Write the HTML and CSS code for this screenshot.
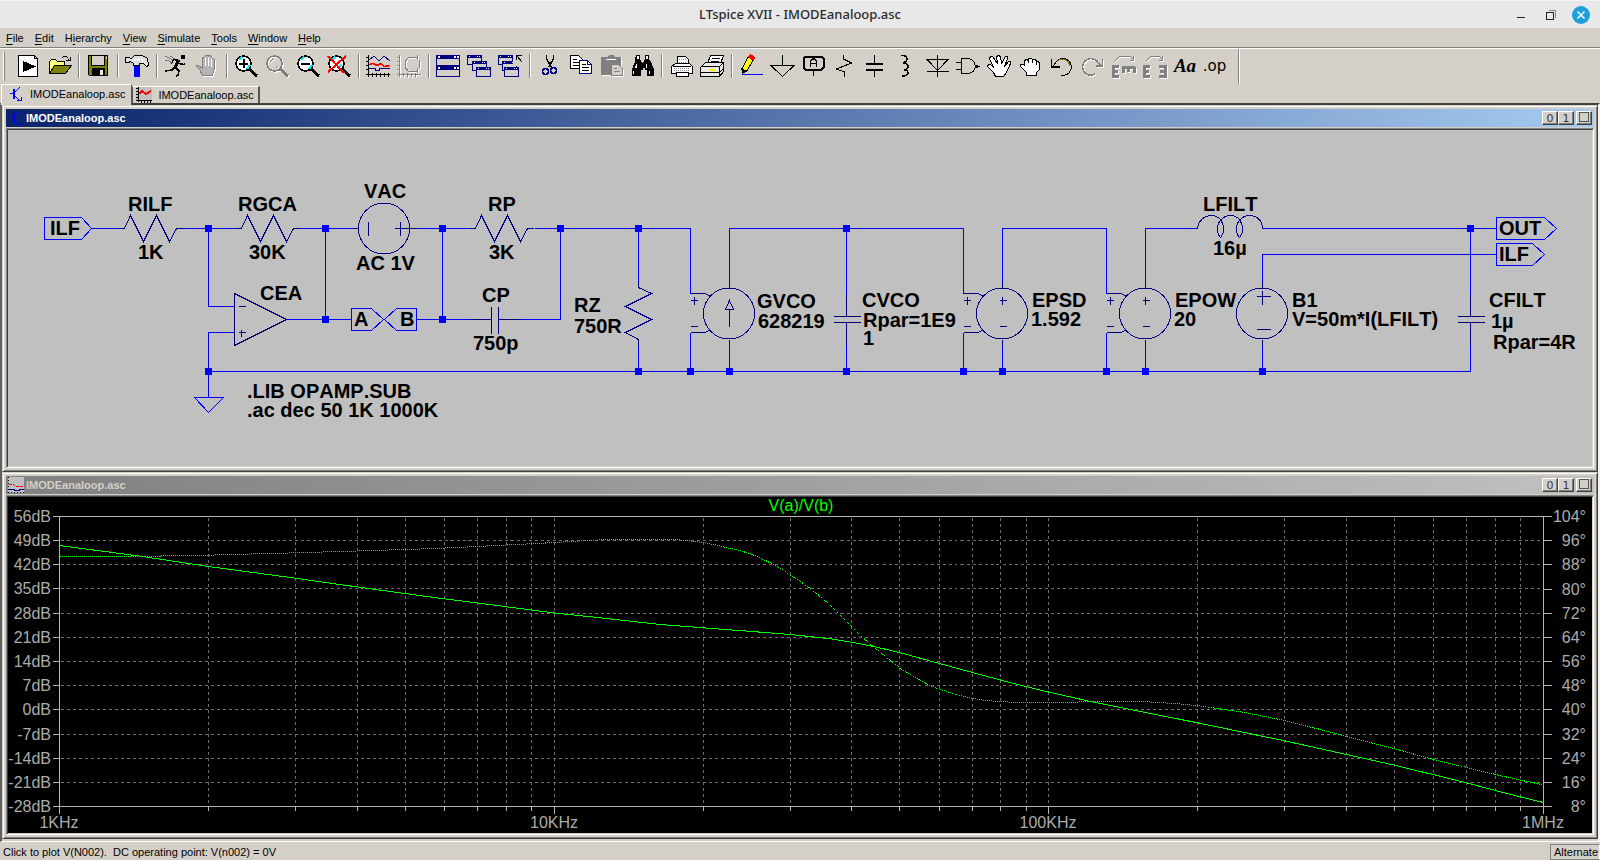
FILE: index.html
```html
<!DOCTYPE html>
<html lang="en">
<head>
<meta charset="utf-8">
<title>LTspice XVII - IMODEanaloop.asc</title>
<link rel="stylesheet" href="styles.css">
</head>
<body>
<header class="titlebar">
  <h1>LTspice XVII - IMODEanaloop.asc</h1>
  <div class="wm">
    <button aria-label="Minimize"><svg viewBox="0 0 18 18"><path d="M5 11.500h8" stroke="#222"/></svg></button>
    <button aria-label="Restore"><svg viewBox="0 0 18 18"><path d="M6.500 4.500h7v7" stroke="#888"/><path d="M4.500 6.500h7v7h-7z" stroke="#222"/></svg></button>
    <button aria-label="Close"><svg viewBox="0 0 18 18" class="smooth"><circle cx="9" cy="9" r="9" fill="#1f9ede"/><path d="M5.500 5.500l7 7M12.500 5.500l-7 7" stroke="#fff" stroke-width="1.500"/></svg></button>
  </div>
</header>
<nav class="menubar">
  <button><u>F</u>ile</button><button><u>E</u>dit</button><button>H<u>i</u>erarchy</button><button><u>V</u>iew</button><button><u>S</u>imulate</button><button><u>T</u>ools</button><button><u>W</u>indow</button><button><u>H</u>elp</button>
</nav>
<div class="toolbar" role="toolbar" aria-label="Main">
  <span class="grip"></span>
  <button aria-label="New schematic"><svg viewBox="0 0 24 24"><path d="M2.500 1.500h16l3 3v18h-19z" fill="#fff"/><path d="M18.500 1.500v3h3"/><path d="M7 7L20 12.500L7 18z" fill="#000" stroke="none"/></svg></button>
  <button aria-label="Open"><svg viewBox="0 0 24 24"><path d="M2.500 19.500v-12l2-2h4l2 2h7v4h-10z" fill="#ffff80"/><path d="M2.500 19.500l5-8h17l-6 8z" fill="#808000"/><path d="M14.500 4.500q3-5 7 0M23.500 2.500v4h-5M21.500 4.500v2"/></svg></button>
  <span class="sep"></span>
  <button aria-label="Save"><svg viewBox="0 0 24 24"><path d="M2.500 1.500h19v20h-18l-1-1z" fill="#808000"/><path d="M5.500 1.500h13v10h-13z" fill="#d4d0c8"/><path d="M6 14h13v8h-13z" fill="#000" stroke="none"/><path d="M14 16h3v5h-3zM20 3h1v2h-1z" fill="#e8e8e8" stroke="none"/></svg></button>
  <span class="sep"></span>
  <button aria-label="Control panel"><svg viewBox="0 0 24 24"><path d="M9.500 11.500h5v11h-5z" fill="#00f" stroke="#00f"/><path d="M14.500 11v11" stroke="#000080"/><path d="M.5 3.500h3l3 1 3-3h8l5 3 1 7-2 1-3-3h-4v2h-6v-2l-3-2-2 1h-3z" fill="#e0e0e0"/><path d="M8 5.500h9M17.500 6v3" stroke="#fff"/></svg></button>
  <span class="sep"></span>
  <button aria-label="Run"><svg viewBox="0 0 24 24"><path d="M17 1h4v4h-4z" fill="#000" stroke="none"/><path d="M15 6l-4 7" stroke-width="3"/><path d="M15 6.500l-5-1-3 4M15.500 9.500l4 1 2-1M11 13l-3 3-7 1M12 14l3 3-1 4-2 1"  stroke-width="1.500"/><path d="M1 2l8 4M1 6l4 1 3 2M6 2l5 3" stroke="#777"/></svg></button>
  <button aria-label="Halt" disabled><svg viewBox="0 0 24 24"><path d="M7 21l-2-5-4-4 2-1 4 3V4l2-1 1 1v7V2l2-1 1 1v9V2l2-1 1 1v10V5l2-1 1 1v11l-2 6z" fill="#b4b4b4" stroke="#808080"/><path d="M10.500 3v9M13.500 3v9M16.500 4v9" stroke="#fff"/></svg></button>
  <span class="sep"></span>
  <button aria-label="Zoom in"><svg viewBox="0 0 24 24"><circle cx="9.500" cy="9.500" r="7.500" fill="#fff" stroke-width="1.500"/><path d="M5 6l3-3M13 15l3-4" stroke="#00e8ff" stroke-width="2"/><path d="M5 9.500h9M9.500 5v9" stroke-width="2"/><path d="M15 15l8 7" stroke-width="3"/></svg></button>
  <button aria-label="Zoom back" disabled><svg viewBox="0 0 24 24"><circle cx="9.500" cy="9.500" r="7.500" stroke-width="1.500"/><path d="M5 8l4-4M13 12l-2 2"/><path d="M15 15l8 7" stroke-width="3"/></svg></button>
  <button aria-label="Zoom out"><svg viewBox="0 0 24 24"><circle cx="9.500" cy="9.500" r="7.500" fill="#fff" stroke-width="1.500"/><path d="M5 6l3-3M13 15l3-4" stroke="#00e8ff" stroke-width="2"/><path d="M5 9.500h9" stroke-width="2"/><path d="M15 15l8 7" stroke-width="3"/></svg></button>
  <button aria-label="Zoom extents"><svg viewBox="0 0 24 24"><circle cx="9.500" cy="9.500" r="7.500" fill="#fff" stroke-width="1.500"/><path d="M5 6l3-3M11 14l3-3" stroke="#00e8ff" stroke-width="2"/><path d="M15 15l8 7" stroke-width="3"/><path d="M1 2l16 17M19 2L1 18" stroke="#f00" stroke-width="2"/></svg></button>
  <span class="sep"></span>
  <button aria-label="Autorange"><svg viewBox="0 0 24 24"><path d="M2.500 1v22M0 20.500h24M0 3.500h3M0 7.500h3M0 11.500h3M0 15.500h3M6.500 19v4M10.500 19v4M14.500 19v4M18.500 19v4M22.500 19v4"/><path d="M3 6l5-4 5 5 5-5 6 5M3 14.500h6v2h4v-2h11" stroke="#000080"/><path d="M3 10.500l4-1 4 2 4-2 3 3 6-1" stroke="#f00" stroke-width="1.500"/></svg></button>
  <button aria-label="Polar plot" disabled><svg viewBox="0 0 24 24"><path d="M2.500 1v22M0 20.500h24M0 3.500h3M0 7.500h3M0 11.500h3M0 15.500h3M6.500 19v4M10.500 19v4M14.500 19v4M18.500 19v4M20.500 1v5M20.500 14v5M22.500 6v8M20 3l-9 1-3 4v5l3 4 9 1"/></svg></button>
  <span class="sep"></span>
  <button aria-label="Tile windows"><svg viewBox="0 0 24 24"><g id="w1"><path d="M.5 1.500h23v10h-23z" fill="#d4d0c8" stroke="#000080"/><path d="M0 1h24v4H0z" fill="#000080" stroke="none"/><path d="M2 2h2v2h-2zM18 2h2v2h-2zM21 2h2v2h-2z" fill="#fff" stroke="none"/></g><use href="#w1" y="11"/></svg></button>
  <button aria-label="Cascade windows"><svg viewBox="0 0 24 24"><g id="w2"><path d="M.5 1.500h14v9h-14z" fill="#d4d0c8" stroke="#000080"/><path d="M0 1h15v3H0z" fill="#000080" stroke="none"/><path d="M2 2h1v1h-1zM10 2h1v1h-1zM12 2h1v1h-1z" fill="#fff" stroke="none"/></g><use href="#w2" x="5" y="6"/><use href="#w2" x="9" y="12"/></svg></button>
  <button aria-label="Close windows"><svg viewBox="0 0 24 24"><use href="#w2"/><path d="M15 1h9v9h-9z" fill="#d4d0c8" stroke="none"/><use href="#w2" x="4" y="6"/><path d="M15 7h8v5h-8z" fill="#d4d0c8" stroke="none"/><use href="#w2" x="6" y="12"/><path d="M18.500 6V1.500h5M19 2l5 6"/></svg></button>
  <span class="sep"></span>
  <button aria-label="Cut"><svg viewBox="0 0 24 24"><path d="M9.500 1v4l5 8M16.500 1v4l-5 8" stroke-width="1.500"/><circle cx="8.500" cy="17.500" r="3" stroke="#000080" stroke-width="1.500"/><circle cx="16.500" cy="16.500" r="3" stroke="#000080" stroke-width="1.500"/></svg></button>
  <button aria-label="Copy"><svg viewBox="0 0 24 24"><path d="M2.500 1.500h8l4 4v9h-12z" fill="#fff"/><path d="M5 5.500h4M5 8.500h6M5 11.500h6"/><path d="M11.500 6.500h8l4 4v9h-12z" fill="#fff" stroke="#000080"/><path d="M19.500 6.500v4h4" stroke="#000080"/><path d="M14 10.500h4M14 13.500h7M14 16.500h7"/></svg></button>
  <button aria-label="Paste" disabled><svg viewBox="0 0 24 24"><path d="M2 3h6l2-2h4l2 2h6v18H2z" fill="#808080" stroke="none"/><path d="M7 5.500h10" stroke="#fff"/><path d="M12.500 10.500h7l4 4v7h-11z" fill="#d4d0c8"/><path d="M15 14.500h3M15 17.500h6"/></svg></button>
  <button aria-label="Find"><svg viewBox="0 0 24 24"><path d="M6 1h4v4l2 4h1l2-4V1h4v4l2 3 3 7v7h-7v-6h-2v-2h-2v2h-2v6H2v-7l3-7V5z" fill="#000" stroke="none"/><path d="M7 2h2v3h-2zM16 2h2v3h-2zM6 10h1v4h-2zM16 10h1v4h-1zM3 17h1v3h-1zM19 17h1v3h-1z" fill="#fff" stroke="none"/></svg></button>
  <span class="sep"></span>
  <button aria-label="Print"><svg viewBox="0 0 24 24"><path d="M8.500 11.500v-9h8l3 3v6" fill="#fff"/><path d="M2.500 12.500l4-3h14l3 3v7h-21z" fill="#fff"/><path d="M10 5.500h7M10 8.500h8M5 14.500h16M5 16.500h16" stroke="#888" stroke-dasharray="1 1"/><path d="M4 12.500h18M7.500 18.500h12v4h-12z" fill="#fff"/></svg></button>
  <button aria-label="Print setup"><svg viewBox="0 0 24 24"><path d="M7.500 9.500l3-8h13l-3 8" fill="#fff"/><path d="M12 4.500h8M11 7.500h8"/><path d="M.5 13.500l5-5h18v9l-4 5H.5z" fill="#e8e8e8"/><path d="M.5 12.500h19l4-4M19.500 12.500v10M.5 18.500h19l4-4"/><path d="M10 15h5v2h-5z" fill="#ee0" stroke="none"/></svg></button>
  <span class="sep"></span>
  <button aria-label="Draw wire"><svg viewBox="0 0 24 24"><path d="M9.500 2.500l5 3-7 12-5-2z" fill="#ff0"/><path d="M9.500 2.500l2-2 4 3-1 3z" fill="#f00" stroke="#f00"/><path d="M3 15l4 2-4 3z" fill="#000"/><path d="M3 20.500h21" stroke="#00f"/></svg></button>
  <button aria-label="Ground"><svg viewBox="0 0 24 24"><path d="M12.500 1v10M1 11.500h23L12.500 22.500z"/></svg></button>
  <button aria-label="Label net"><svg viewBox="0 0 24 24"><path d="M4.500 2.500h16l2 2v9l-2 2h-16l-2-2v-9z" stroke-width="2"/><path d="M12.500 16v6"/><path d="M9.500 13V7l2-2h2l2 2v6M10 9.500h5" stroke-width="1.500"/></svg></button>
  <button aria-label="Resistor"><svg viewBox="0 0 24 24"><path d="M11.500 1v4l8 4-15 6 8 3v5"/></svg></button>
  <button aria-label="Capacitor"><svg viewBox="0 0 24 24"><path d="M11.500 1v8M11.500 16v7"/><path d="M3 10h17M3 16h17" stroke-width="2"/></svg></button>
  <button aria-label="Inductor"><svg viewBox="0 0 24 24"><path d="M7 1.500h3q3 1 3 3.500t-4 4h2q3 1 3 3.500t-4 3.500h2q2 1 2 3t-4 3h-2" stroke-width="1.500"/></svg></button>
  <button aria-label="Diode"><svg viewBox="0 0 24 24"><path d="M12.500 1v22M2 5.500h21l-10.500 11zM2 17.500h22"/></svg></button>
  <button aria-label="Component"><svg viewBox="0 0 24 24"><path d="M5.500 4.500h7q6 1 7 8-1 6-7 7h-7zM0 8.500h5M0 15.500h5M19 12.500h5"/><path d="M19 11h3v3h-3z" fill="#000" stroke="none"/></svg></button>
  <button aria-label="Move"><svg viewBox="0 0 24 24"><path d="M8.500 22.500l-2-4-6-6 1-2h2l3 3-4-9 1-2h2l5 7-1-7 2-1 2 1 1 7 4-7h2v2l-3 8 4-5h2v2l-4 9-3 4z" fill="#fff"/></svg></button>
  <button aria-label="Drag"><svg viewBox="0 0 24 24"><path d="M8.500 21.500v-3l-6-6v-2h3l1 1V6.500l2-1 2 1v-2h3l1 1h3l1 2h2l1 2v6l-3 3v3z" fill="#fff"/><path d="M10.500 6v3M14.500 6v3M18.500 8v3"/></svg></button>
  <button aria-label="Undo"><svg viewBox="0 0 24 24"><path d="M4 12L8 7q6-5 12 0 5 6 0 12-3 3-8 2"/><path d="M2.500 5v8h8" stroke-width="1.500"/><path d="M9 6.500q5-3 10 1l2 4" stroke="#808000"/></svg></button>
  <button aria-label="Redo" disabled><svg viewBox="0 0 24 24"><path d="M21 12L17 7q-6-5-12 0-5 6 0 12 5 4 10 1" stroke-width="1.500"/><path d="M22.500 5v7h-7" stroke-width="1.500"/></svg></button>
  <button aria-label="Rotate" disabled><svg viewBox="0 0 24 24"><path d="M4 7l5-5h10l3 3M22.500 2v4h-4"/><path d="M8 12H2v10h6M2 17h5M11 13h13M12 13v6M17.500 13v5M23 13v6" stroke-width="3"/></svg></button>
  <button aria-label="Mirror" disabled><svg viewBox="0 0 24 24"><path d="M4 7l5-5h8l3 3M20.500 2v4h-4"/><path d="M8 12H2v10h6M2 17h5M17 12h6v10h-6M23 17h-5" stroke-width="3"/></svg></button>
  <button aria-label="Text" class="tx">Aa</button>
  <button aria-label="SPICE directive" class="op">.op</button>
  <span class="end"></span>
</div>
<div class="tabs" role="tablist">
  <button class="tab on" role="tab" aria-selected="true"><svg viewBox="0 0 16 16"><g id="tr"><path d="M0 7.500h5" stroke="#00f"/><path d="M4 3v10" stroke="#00f" stroke-width="2"/><path d="M5 6l5-5M5 10l4 4M7 14.500h4v-4" stroke="#00f"/></g></svg>IMODEanaloop.asc</button>
  <button class="tab" role="tab" aria-selected="false"><svg viewBox="0 0 16 16"><path d="M0 0h16v13H0z" fill="#c0c0c0" stroke="none"/><path d="M2.500 0v15M0 13.500h16M0 1.500h3M0 4.500h3M0 7.500h3M0 10.500h3M5.500 13v3M8.500 13v3M11.500 13v3M14.500 13v3"/><path d="M3 7l3-3 4 3 5-3" stroke="#f00" stroke-width="2"/></svg>IMODEanaloop.asc</button>
</div>
<main class="mdi">
  <section class="win">
    <div class="cap"><svg viewBox="0 0 16 16"><use href="#tr" x="2"/></svg><h2>IMODEanaloop.asc</h2><button>0</button><button>1</button><button aria-label="Maximize" class="max"><i></i></button></div>
    <div class="client">
      <svg class="sch" viewBox="8 130 1584 336">
        <defs>
          <g id="res"><path d="M-6 0H0L6-13 19 13 32-13 45 13 52 0H58"/></g>
          <g id="in"><path d="M-39-20h15l5 3M-39 19h15l5-3M-39-13h7M-35.500-17v8M-39 13h7"/></g>
          <g id="circ"><circle cx="-.5" r="25.500"/><path d="M0-32v6M0 26v6"/></g>
          <g id="pm"><path d="M-3-13h7M0-17v8M-3 13h7"/></g>
          <g id="capa"><path d="M0-25v22M-13-3h27M-13 3h27M0 3v22"/></g>
          <path id="n" d="M-3.500-3.500h7v7h-7z"/>
        </defs>
        <g transform="translate(.5 .5)">
          <g class="wire">
            <path d="M44 217h37l10 11-10 11H44zM91 228h27M182 228h53M208 228v78h26M234 332h-26v65M194 397h29l-15 15zM299 228h53M325 228v91M286 319h65M351 308h20l12 11-12 11h-20zM416 308h-20l-12 11 12 11h20zM416 228h53M442 228v91M416 319h53M534 228h156v65M521 319h39v-91M638 228v53M638 345v26M690 371v-39M729 281v-53h234v65M729 345v26M846 228v66M846 344v27M963 371v-39M1002 345v26M1002 281v-53h104v65M1106 371v-39M1145 281v-53h52M1145 345v26M1262 228h234M1262 281v-27h234M1262 345v26M1470 228v66M1470 344v27M208 371h1262M1496 217h48l12 11-12 11h-48zM1496 243h36l12 11-12 11h-36z"/>
          </g>
          <g class="part">
            <use href="#res" x="124" y="228"/><use href="#res" x="241" y="228"/><use href="#res" x="475" y="228"/>
            <path d="M638 281v6l13 6-26 13 26 13-26 13 13 7v6"/>
            <path d="M234 293v52l52-26zM238 306h7M238 332h7M241 329v7"/>
            <circle cx="383.500" cy="228" r="25.500"/><path d="M352 228h6M409 228h7M368 221v14M394 228h14M400 221v14"/>
            <path d="M469 319h22M491 306v27M498 306v27M498 319h23"/>
            <use href="#circ" x="729" y="313"/><use href="#in" x="729" y="313"/><path d="M729 309v17M725 309l4-9 4 9z"/>
            <use href="#capa" x="846" y="319"/><use href="#capa" x="1470" y="319"/>
            <use href="#circ" x="1002" y="313"/><use href="#in" x="1002" y="313"/><use href="#pm" x="1002" y="313"/>
            <use href="#circ" x="1145" y="313"/><use href="#in" x="1145" y="313"/><use href="#pm" x="1145" y="313"/>
            <use href="#circ" x="1262" y="313"/><path d="M1256 296h14M1262 290v14M1256 329h14"/>
            <path d="M1197 228C1198 220 1204 215 1211 215 1219 215 1223 222 1223 228Q1223 234 1220 237 1217 234 1217 228C1217 221 1223 215 1230 215 1238 215 1242 222 1242 228Q1242 234 1239 237 1236 234 1236 228C1236 221 1242 215 1249 215 1257 215 1262 221 1262 228"/>
          </g>
          <g class="node">
            <use href="#n" x="208" y="228"/><use href="#n" x="325" y="228"/><use href="#n" x="442" y="228"/><use href="#n" x="560" y="228"/><use href="#n" x="638" y="228"/><use href="#n" x="846" y="228"/><use href="#n" x="1470" y="228"/><use href="#n" x="325" y="319"/><use href="#n" x="442" y="319"/><use href="#n" x="208" y="371"/><use href="#n" x="638" y="371"/><use href="#n" x="690" y="371"/><use href="#n" x="729" y="371"/><use href="#n" x="846" y="371"/><use href="#n" x="963" y="371"/><use href="#n" x="1002" y="371"/><use href="#n" x="1106" y="371"/><use href="#n" x="1145" y="371"/><use href="#n" x="1262" y="371"/>
          </g>
        </g>
        <g class="lbl">
          <text x="50" y="235">ILF</text><text x="128" y="211">RILF</text><text x="138" y="259">1K</text>
          <text x="238" y="211">RGCA</text><text x="249" y="259">30K</text>
          <text x="364" y="198">VAC</text><text x="356" y="270">AC 1V</text>
          <text x="260" y="300">CEA</text><text x="354" y="326">A</text><text x="400" y="326">B</text>
          <text x="247" y="398">.LIB OPAMP.SUB</text><text x="247" y="417">.ac dec 50 1K 1000K</text>
          <text x="488" y="211">RP</text><text x="489" y="259">3K</text><text x="482" y="302">CP</text><text x="473" y="350">750p</text>
          <text x="574" y="312">RZ</text><text x="574" y="333">750R</text>
          <text x="757" y="308">GVCO</text><text x="758" y="328">628219</text>
          <text x="862" y="307">CVCO</text><text x="863" y="327">Rpar=1E9</text><text x="863" y="345">1</text>
          <text x="1032" y="307">EPSD</text><text x="1031" y="326">1.592</text>
          <text x="1175" y="307">EPOW</text><text x="1174" y="326">20</text>
          <text x="1203" y="211">LFILT</text><text x="1213" y="255">16µ</text>
          <text x="1292" y="307">B1</text><text x="1292" y="326">V=50m*I(LFILT)</text>
          <text x="1499" y="235">OUT</text><text x="1499" y="261">ILF</text>
          <text x="1489" y="307">CFILT</text><text x="1491" y="328">1µ</text><text x="1493" y="349">Rpar=4R</text>
        </g>
      </svg>
    </div>
  </section>
  <section class="win off">
    <div class="cap"><svg viewBox="0 0 16 16"><path d="M0 0h16v16H0z" fill="#c0c0c0" stroke="none"/><path d="M.5 0v16M0 15.500h16" stroke-dasharray="1 2"/><path d="M1 7.500h4l3 2h8" stroke="#f00" stroke-dasharray="3 1"/><path d="M0 12.500h6v1h5v-1h5" stroke="#000080"/></svg><h2>IMODEanaloop.asc</h2><button>0</button><button>1</button><button aria-label="Maximize" class="max"><i></i></button></div>
    <div class="client">
      <svg class="plot" viewBox="8 497 1584 336">
        <g transform="translate(.5 .5)">
          <path class="grid" d="M60 540H1543M60 564H1543M60 588H1543M60 613H1543M60 637H1543M60 661H1543M60 685H1543M60 709H1543M60 734H1543M60 758H1543M60 782H1543"/>
          <path class="grid" d="M208 517V806M295 517V806M357 517V806M405 517V806M444 517V806M477 517V806M506 517V806M531 517V806M554 517V806M703 517V806M790 517V806M851 517V806M899 517V806M939 517V806M972 517V806M1000 517V806M1026 517V806M1048 517V806M1197 517V806M1284 517V806M1346 517V806M1394 517V806M1433 517V806M1466 517V806M1495 517V806M1520 517V806"/>
          <path class="axis" d="M52 516H1551M52 806H1551M59 516V813M1543 516V813M554 806v7M1048 806v7M52 540h7M52 564h7M52 588h7M52 613h7M52 637h7M52 661h7M52 685h7M52 709h7M52 734h7M52 758h7M52 782h7M1543 540h8M1543 564h8M1543 589h8M1543 613h8M1543 637h8M1543 661h8M1543 685h8M1543 709h8M1543 734h8M1543 758h8M1543 782h8M208 806v4M295 806v4M357 806v4M405 806v4M444 806v4M477 806v4M506 806v4M531 806v4M703 806v4M790 806v4M851 806v4M899 806v4M939 806v4M972 806v4M1000 806v4M1026 806v4M1197 806v4M1284 806v4M1346 806v4M1394 806v4M1433 806v4M1466 806v4M1495 806v4M1520 806v4"/>
          <polyline class="mag" points="59,545 142,556 208,566 295,577.700 357,586.500 430,596.500 477,602.500 554,612.500 600,617.300 660,624 703,627.300 745,630.500 790,634 830,638.300 851,641.700 872,645.700 899,652 939,663 972,672 1000,679.500 1026,686.200 1048,691.500 1090,701 1197,722.300 1284,740.300 1346,754 1394,764.700 1433,774.200 1466,782.300 1495,790 1520,796.500 1543,802"/>
          <polyline class="pha" points="59,556 130,556 208,554.700 295,552.300 357,550.500 405,549 430,548.200 477,546 531,543.300 554,542 580,540.400 600,539.400 640,539 676,539.200 690,540.500 703,542 718,545 730,548 740,550.300 750,553.300 760,557.500 770,562.500 780,568.200 790,574.500 800,581 810,588 820,596.300 830,605 840,615.300 851,626 861,636 872,645.500 885,656 899,667 909,674 920,680 929,684.800 939,688.700 955,694 972,698 985,700 1000,701.200 1026,702.200 1048,702.200 1090,701.200 1150,701.500 1175,703 1197,705.200 1240,711.200 1284,720 1320,729 1346,736 1394,748.300 1433,759 1466,767 1495,774 1520,779.700 1543,784.300"/>
        </g>
        <g class="ax r"><text x="51" y="522">56dB</text><text x="51" y="546">49dB</text><text x="51" y="570">42dB</text><text x="51" y="594">35dB</text><text x="51" y="619">28dB</text><text x="51" y="643">21dB</text><text x="51" y="667">14dB</text><text x="51" y="691">7dB</text><text x="51" y="715">0dB</text><text x="51" y="740">-7dB</text><text x="51" y="764">-14dB</text><text x="51" y="788">-21dB</text><text x="51" y="812">-28dB</text></g>
        <g class="ax r"><text x="1586" y="522">104°</text><text x="1586" y="546">96°</text><text x="1586" y="570">88°</text><text x="1586" y="595">80°</text><text x="1586" y="619">72°</text><text x="1586" y="643">64°</text><text x="1586" y="667">56°</text><text x="1586" y="691">48°</text><text x="1586" y="715">40°</text><text x="1586" y="740">32°</text><text x="1586" y="764">24°</text><text x="1586" y="788">16°</text><text x="1586" y="812">8°</text></g>
        <g class="ax m"><text x="59" y="828">1KHz</text><text x="554" y="828">10KHz</text><text x="1048" y="828">100KHz</text><text x="1543" y="828">1MHz</text><text x="801" y="511" class="trace">V(a)/V(b)</text></g>
      </svg>
    </div>
  </section>
</main>
<footer class="status"><span class="msg">Click to plot V(N002).&nbsp; DC operating point: V(n002) = 0V</span><span class="pane">Alternate</span></footer>
</body>
</html>
```
FILE: styles.css
```css
* { box-sizing: border-box; }
body {
  margin: 0;
  min-height: 100vh;
  display: flex;
  flex-direction: column;
  background: #d4d0c8;
  color: #000;
  font: 11px/13px "Liberation Sans", Arial, sans-serif;
}
button { margin: 0; padding: 0; border: 0; background: none; color: inherit; font: inherit; }
svg { display: block; fill: none; stroke: #000; shape-rendering: crispEdges; }
text { stroke: none; }
.smooth { shape-rendering: auto; stroke: none; }

.titlebar {
  display: grid;
  grid-template-columns: 1fr auto 1fr;
  align-items: center;
  height: 28px;
  background: #e8e8e8;
  border-top: 1px solid #f4f4f4;
}
.titlebar h1 { grid-column: 2; margin: 0 0 2px; color: #2a2a2a; font: 500 13px/18px "Noto Sans", sans-serif; }
.wm { display: flex; justify-content: flex-end; gap: 12px; padding-right: 10px; }
.wm svg { width: 18px; height: 18px; }

.menubar { display: flex; height: 20px; padding-top: 2px; align-items: center; border-bottom: 1px solid #808080; }
.menubar button { padding: 0 5px 0 6px; }
.menubar u { text-underline-offset: 2px; }

.toolbar { display: flex; height: 36px; padding-left: 3px; border-top: 1px solid #fff; }
.toolbar button { width: 31px; height: 35px; padding: 5px 4px 6px 3px; }
.toolbar svg { width: 24px; height: 24px; overflow: visible; }
.toolbar button:disabled svg { stroke: #808080; filter: drop-shadow(1px 1px 0 #fff); }
.grip { width: 2px; height: 29px; margin: 3px 8px 0 0; border-left: 1px solid #fff; border-right: 1px solid #808080; }
.sep { width: 2px; height: 24px; margin: 5px 3px 0; border-left: 1px solid #808080; border-right: 1px solid #fff; }
.end { width: 2px; margin-left: 6px; border-left: 1px solid #808080; border-right: 1px solid #fff; }
.toolbar .tx { color: #000; font: italic bold 19px/24px "Liberation Serif", serif; }
.toolbar .op { padding-left: 0; color: #000; font: 15px/24px "DejaVu Sans", sans-serif; }

.tabs { display: flex; height: 19px; padding-left: 1px; align-items: flex-end; }
.tab {
  display: flex;
  align-items: center;
  gap: 6px;
  height: 17px;
  padding: 0 4px 0 3px;
  border-top: 1px solid #fff;
  border-right: 2px solid #555;
  border-left: 1px solid #555;
}
.tab svg { width: 16px; height: 16px; }
.tab.on {
  position: relative;
  z-index: 1;
  gap: 4px;
  height: 21px;
  margin-bottom: -2px;
  padding: 0 6px 2px 8px;
  background: #d4d0c8;
  border-left: 1px solid #fff;
  border-right: 1px solid #555;
}

.mdi {
  flex: 1;
  padding-bottom: 2px;
  border: solid;
  border-width: 2px 2px 1px;
  border-color: #404040 #f4f2ec #fff #606060;
}
.win { padding: 3px; border: 1px solid; border-color: #d4d0c8 #404040 #404040 #d4d0c8; box-shadow: inset 1px 1px #fff, inset -1px -1px #808080; }
.cap {
  display: flex;
  align-items: center;
  height: 18px;
  padding: 0 2px;
  background: linear-gradient(90deg, #0a246a, #a6caf0);
  color: #fff;
}
.off .cap { background: linear-gradient(90deg, #808080, #c0c0c0); color: #d4d0c8; }
.cap svg { width: 16px; height: 16px; margin-right: 2px; }
.cap h2 { flex: 1; margin: 0; font: bold 11px/16px "Liberation Sans", sans-serif; }
.cap button {
  width: 16px;
  height: 14px;
  background: #d4d0c8;
  border: 1px solid;
  border-color: #fff #404040 #404040 #fff;
  box-shadow: inset -1px -1px #808080;
  color: #333;
  font: 11px/11px "DejaVu Sans", sans-serif;
}
.cap .max { margin-left: 2px; }
.max i { display: block; width: 10px; height: 10px; margin: 0 0 2px 2px; border: 1px solid #555; }
.client { margin-top: 1px; border: 1px solid; border-color: #808080 #fff #fff #808080; padding: 1px; background: linear-gradient(#404040, #404040) top left / 100% 1px no-repeat, linear-gradient(#404040, #404040) top left / 1px 100% no-repeat, #d4d0c8; }
.client svg { width: 100%; height: auto; }

.sch { background: #c0c0c0; }
.wire { stroke: #00f; }
.part { stroke: #000080; }
.node { fill: #00f; stroke: none; }
.lbl { fill: #000; stroke: none; font: bold 20px "Liberation Sans", sans-serif; font-kerning: none; }

.plot { background: #000; }
.grid { stroke: #6e6e6e; stroke-dasharray: 3 3; }
.axis { stroke: #b4b4b4; }
.mag { stroke: #0f0; }
.pha { stroke: #0f0; stroke-dasharray: 1 1; }
.ax { fill: #acacac; stroke: none; font: 16px "Liberation Sans", sans-serif; font-kerning: none; }
.r { text-anchor: end; }
.m { text-anchor: middle; }
.trace { fill: #0f0; }

.status { display: flex; height: 18px; justify-content: space-between; align-items: center; padding: 2px 0 0 3px; }
.pane { height: 16px; padding: 1px 1px 0 3px; border: 1px solid #808080; border-right-color: #fff; }
```
